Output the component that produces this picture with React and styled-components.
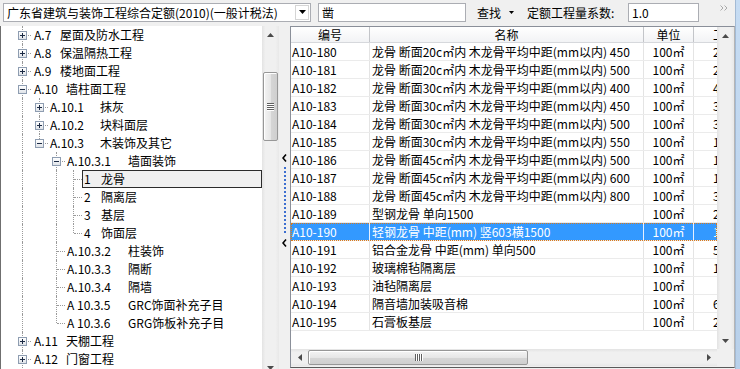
import React from 'react';
import styled, { createGlobalStyle, css } from 'styled-components';

const GlobalStyle = createGlobalStyle`
  *, *::before, *::after { box-sizing: border-box; }
  html, body { margin: 0; padding: 0; }
  body {
    width: 740px;
    height: 369px;
    overflow: hidden;
    background: #f0f0f0;
    font-family: "Noto Sans CJK SC", "Liberation Sans", sans-serif;
    font-size: 12px;
    color: #000;
  }
`;

/* ---------- frame ---------- */
const Frame = styled.div`
  display: flex;
  width: 740px;
  height: 369px;
  overflow: hidden;
`;
const Window = styled.div`
  flex: 1;
  min-width: 0;
  display: flex;
  flex-direction: column;
`;
const FrameEdge = styled.div`
  width: 5px;
  flex: none;
  background: linear-gradient(#c6dcf3, #b8d0ea);
  border-left: 1px solid #a3bad4;
`;

/* ---------- toolbar ---------- */
const Toolbar = styled.div`
  height: 26px;
  flex: none;
  display: flex;
  align-items: center;
  padding: 0 0 2px 3px;
  white-space: nowrap;
`;
const Combo = styled.div`
  width: 308px;
  height: 19px;
  display: flex;
  align-items: center;
  background: #fff;
  border: 1px solid #abadb3;
  padding-left: 3px;
`;
const ComboText = styled.span`
  flex: 1;
  overflow: hidden;
  line-height: 17px;
`;
const ComboButton = styled.div`
  width: 14px;
  height: 15px;
  margin-right: 1px;
  display: flex;
  align-items: center;
  justify-content: center;
  border: 1px solid #d5d5d5;
  background: #fff;
`;
const TextBox = styled.div`
  width: ${p => p.$w}px;
  height: 19px;
  margin-left: ${p => p.$ml}px;
  background: #fff;
  border: 1px solid #abadb3;
  padding-left: 3px;
  line-height: 17px;
`;
const MenuButton = styled.div`
  width: 38px;
  margin-left: 11px;
  display: flex;
  align-items: center;
  gap: 8px;
`;
const FieldLabel = styled.span`
  width: 101px;
  margin-left: 12px;
`;
const OverflowChevron = styled.div`
  margin-left: auto;
  margin-right: 7px;
  margin-top: -8px;
  display: flex;
`;

/* ---------- main area ---------- */
const Main = styled.div`
  flex: 1;
  min-height: 0;
  display: flex;
  align-items: flex-start;
  overflow: hidden;
`;

/* ---------- tree ---------- */
const TreePanel = styled.div`
  width: 279px;
  height: 350px;
  flex: none;
  display: flex;
  background: #fff;
  border-left: 1px solid #6f6f6f;
`;
const TreeList = styled.div`
  flex: 1;
  min-width: 0;
  overflow: hidden;
`;
const TreeRow = styled.div`
  height: 18px;
  display: flex;
  align-items: stretch;
  padding-left: 13px;
`;
const dotted = '1px dotted #9a9a9a';
const Guide = styled.div`
  width: 17px;
  flex: none;
  position: relative;
  ${p => p.$line && css`
    &::before {
      content: '';
      position: absolute;
      left: 8px;
      top: 0;
      bottom: 0;
      border-left: ${dotted};
    }
  `}
`;
const Branch = styled.div`
  width: 17px;
  flex: none;
  position: relative;
  display: flex;
  align-items: center;
  justify-content: center;
  &::before {
    content: '';
    position: absolute;
    left: 8px;
    top: 0;
    height: ${p => (p.$last ? 9 : 18)}px;
    border-left: ${dotted};
  }
  &::after {
    content: '';
    position: absolute;
    left: 9px;
    top: 9px;
    width: 8px;
    border-top: ${dotted};
  }
`;
const Expander = styled.div`
  position: relative;
  z-index: 1;
  width: 9px;
  height: 9px;
  margin-left: -1px;
  border: 1px solid #8e9db1;
  background: linear-gradient(#ffffff, #dfe3e8);
  display: flex;
`;
const ItemLabel = styled.div`
  display: flex;
  align-items: center;
  height: 18px;
  margin-left: ${p => (p.$level === 0 ? 1 : 0)}px;
  padding-left: 1px;
  border: 1px solid transparent;
  line-height: 16px;
  white-space: nowrap;
  ${p => p.$selected && css`
    flex: 1;
    border-color: #2b2b2b;
    background: #f0f0f0;
  `}
`;
const Code = styled.span`
  display: inline-block;
  width: ${p => p.$w}px;
  flex: none;
`;
const Name = styled.span``;

/* ---------- scrollbars ---------- */
const VScroll = styled.div`
  width: 17px;
  flex: none;
  display: flex;
  flex-direction: column;
  background: linear-gradient(to right, #e3e3e3, #f0f0f0 20%, #f0f0f0 80%, #e8e8e8);
`;
const HScroll = styled.div`
  height: 17px;
  flex: 1;
  display: flex;
  background: linear-gradient(#e3e3e3, #f0f0f0 20%, #f0f0f0 80%, #e8e8e8);
`;
const ArrowBox = styled.div`
  width: 17px;
  height: 17px;
  flex: none;
  display: flex;
  align-items: center;
  justify-content: center;
`;
const Filler = styled.div`flex: 1;`;
const VThumb = styled.div`
  margin-top: ${p => p.$offset}px;
  height: ${p => p.$size}px;
  margin-left: 1px;
  margin-right: 1px;
  border: 1px solid #979797;
  border-radius: 2px;
  background: linear-gradient(to right, #f4f4f4, #e6e6e6 50%, #d6d6d6 51%, #cfcfcf);
  box-shadow: inset 1px 1px 0 #fff;
  display: flex;
  flex-direction: column;
  align-items: center;
  justify-content: center;
  gap: 1px;
`;
const HThumb = styled.div`
  margin-left: ${p => p.$offset}px;
  width: ${p => p.$size}px;
  margin-top: 1px;
  margin-bottom: 1px;
  border: 1px solid #979797;
  border-radius: 2px;
  background: linear-gradient(#f4f4f4, #e6e6e6 50%, #d6d6d6 51%, #cfcfcf);
  box-shadow: inset 1px 1px 0 #fff;
  display: flex;
  align-items: center;
  justify-content: center;
  gap: 1px;
`;
const GripV = styled.span`
  width: 7px;
  height: 1px;
  background: #5f5f5f;
  box-shadow: 0 1px 0 #fff;
`;
const GripH = styled.span`
  width: 1px;
  height: 7px;
  background: #5f5f5f;
  box-shadow: 1px 0 0 #fff;
`;

const Tri = ({ dir }) => {
  const d = {
    up: 'M0 4 L3.5 0 L7 4 Z',
    down: 'M0 0 L7 0 L3.5 4 Z',
    left: 'M4 0 L4 7 L0 3.5 Z',
    right: 'M0 0 L4 3.5 L0 7 Z',
  }[dir];
  const horiz = dir === 'left' || dir === 'right';
  return (
    <svg width={horiz ? 4 : 7} height={horiz ? 7 : 4} viewBox={horiz ? '0 0 4 7' : '0 0 7 4'}>
      <path d={d} fill="#4a4a4a" />
    </svg>
  );
};

/* ---------- splitter ---------- */
const Splitter = styled.div`
  width: 11px;
  flex: none;
  align-self: stretch;
  display: flex;
  flex-direction: column;
  align-items: center;
  padding-top: 126px;
  gap: 3px;
`;
const DotLine = styled.div`
  width: 2px;
  height: 67px;
  background: repeating-linear-gradient(#3d6fd0 0 2px, transparent 2px 4px);
`;
const Chevron = () => (
  <svg width="5" height="12" viewBox="0 0 5 12">
    <path d="M4 2.5 L1 6 L4 9.5" stroke="#000" strokeWidth="1.6" fill="none" />
  </svg>
);

/* ---------- grid ---------- */
const GridPanel = styled.div`
  flex: 1;
  min-width: 0;
  align-self: stretch;
  display: flex;
  flex-direction: column;
  border-top: 1px solid #8a8f99;
  border-left: 1px solid #8a8f99;
  border-right: 1px solid #b5b5b5;
  border-bottom: 1px solid #5a5a5a;
  margin-bottom: 1px;
  background: #fff;
`;
const GridBody = styled.div`
  flex: 1;
  min-height: 0;
  display: flex;
`;
const Viewport = styled.div`
  flex: 1;
  min-width: 0;
  overflow: hidden;
`;
const HeaderRow = styled.div`
  height: 16px;
  display: flex;
  background: linear-gradient(#ffffff, #f2f3f5);
  border-bottom: 1px solid #d6d8dc;
  white-space: nowrap;
`;
const HeaderCell = styled.div`
  width: ${p => p.$w}px;
  flex: none;
  text-align: center;
  line-height: 15px;
  border-right: 1px solid #c3c5c9;
  overflow: hidden;
  padding-left: ${p => p.$pl || 0}px;
  ${p => p.$pl && css`text-align: left;`}
`;
const DataRow = styled.div`
  height: 18px;
  display: flex;
  white-space: nowrap;
  border-bottom: 1px solid #ebebeb;
  ${p => p.$selected && css`
    background: #3399ff;
    color: #fff;
    outline: 1px dotted #d87a1e;
    outline-offset: -1px;
  `}
`;
const Cell = styled.div`
  width: ${p => p.$w}px;
  flex: none;
  line-height: 17px;
  padding-left: ${p => p.$pl}px;
  text-align: ${p => (p.$center ? 'center' : 'left')};
  border-right: 1px solid ${p => (p.$selected ? '#e6f0ff' : '#e4e4e4')};
  overflow: hidden;
`;
const HScrollRow = styled.div`
  height: 17px;
  flex: none;
  display: flex;
`;
const Corner = styled.div`
  width: 17px;
  background: #f0f0f0;
`;
const BottomGap = styled.div`
  height: 1px;
  flex: none;
  background: #f0f0f0;
`;

/* ---------- data ---------- */
const tree = [
  { level: 0, anc: [], exp: '+', code: 'A.7', w: 26, name: '屋面及防水工程' },
  { level: 0, anc: [], exp: '+', code: 'A.8', w: 26, name: '保温隔热工程' },
  { level: 0, anc: [], exp: '+', code: 'A.9', w: 26, name: '楼地面工程' },
  { level: 0, anc: [], exp: '-', code: 'A.10', w: 32, name: '墙柱面工程' },
  { level: 1, anc: [true], exp: '+', code: 'A.10.1', w: 50, name: '抹灰' },
  { level: 1, anc: [true], exp: '+', code: 'A.10.2', w: 50, name: '块料面层' },
  { level: 1, anc: [true], exp: '-', last: true, code: 'A.10.3', w: 50, name: '木装饰及其它' },
  { level: 2, anc: [true, false], exp: '-', code: 'A.10.3.1', w: 61, name: '墙面装饰' },
  { level: 3, anc: [true, false, true], code: '1', w: 17, name: '龙骨', sel: true },
  { level: 3, anc: [true, false, true], code: '2', w: 17, name: '隔离层' },
  { level: 3, anc: [true, false, true], code: '3', w: 17, name: '基层' },
  { level: 3, anc: [true, false, true], last: true, code: '4', w: 17, name: '饰面层' },
  { level: 2, anc: [true, false], code: 'A.10.3.2', w: 61, name: '柱装饰' },
  { level: 2, anc: [true, false], code: 'A.10.3.3', w: 61, name: '隔断' },
  { level: 2, anc: [true, false], code: 'A.10.3.4', w: 61, name: '隔墙' },
  { level: 2, anc: [true, false], code: 'A 10.3.5', w: 61, name: 'GRC饰面补充子目' },
  { level: 2, anc: [true, false], last: true, code: 'A 10.3.6', w: 61, name: 'GRG饰板补充子目' },
  { level: 0, anc: [], exp: '+', code: 'A.11', w: 32, name: '天棚工程' },
  { level: 0, anc: [], exp: '+', code: 'A.12', w: 32, name: '门窗工程' },
];

const lg = (sec, dist) => `龙骨 断面${sec}c㎡内 木龙骨平均中距(mm以内) ${dist}`;
const rows = [
  ['A10-180', lg(20, 450), '2.36'],
  ['A10-181', lg(20, 500), '2.17'],
  ['A10-182', lg(30, 400), '4.11'],
  ['A10-183', lg(30, 450), '3.54'],
  ['A10-184', lg(30, 500), '3.22'],
  ['A10-185', lg(30, 550), '1.98'],
  ['A10-186', lg(45, 500), '1.74'],
  ['A10-187', lg(45, 600), '1.55'],
  ['A10-188', lg(45, 800), '3.01'],
  ['A10-189', '型钢龙骨 单向1500', '2.40'],
  ['A10-190', '轻钢龙骨 中距(mm) 竖603横1500', '1.00'],
  ['A10-191', '铝合金龙骨 中距(mm) 单向500', '5.10'],
  ['A10-192', '玻璃棉毡隔离层', '1.00'],
  ['A10-193', '油毡隔离层', ''],
  ['A10-194', '隔音墙加装吸音棉', '6.00'],
  ['A10-195', '石膏板基层', '2.10'],
];
const SELECTED_ROW = 'A10-190';

const cols = { code: 79, name: 274, unit: 50, qty: 70 };

/* ---------- components ---------- */
const PlusMinus = ({ plus }) => (
  <svg width="7" height="7" viewBox="0 0 7 7" shapeRendering="crispEdges">
    <rect x="1" y="3" width="5" height="1" fill="#1b2a44" />
    {plus && <rect x="3" y="1" width="1" height="5" fill="#1b2a44" />}
  </svg>
);

function TreeNode({ node }) {
  return (
    <TreeRow>
      {node.anc.map((cont, i) => (
        <Guide key={i} $line={cont} />
      ))}
      <Branch $last={node.last}>
        {node.exp && (
          <Expander>
            <PlusMinus plus={node.exp === '+'} />
          </Expander>
        )}
      </Branch>
      <ItemLabel $level={node.level} $selected={node.sel}>
        <Code $w={node.w}>{node.code}</Code>
        <Name>{node.name}</Name>
      </ItemLabel>
    </TreeRow>
  );
}

function VerticalScrollbar({ thumb }) {
  return (
    <VScroll>
      <ArrowBox><Tri dir="up" /></ArrowBox>
      {thumb && (
        <VThumb $offset={thumb.offset} $size={thumb.size}>
          <GripV /><GripV /><GripV /><GripV />
        </VThumb>
      )}
      <Filler />
      <ArrowBox><Tri dir="down" /></ArrowBox>
    </VScroll>
  );
}

function HorizontalScrollbar({ thumb }) {
  return (
    <HScroll>
      <ArrowBox><Tri dir="left" /></ArrowBox>
      <HThumb $offset={thumb.offset} $size={thumb.size}>
        <GripH /><GripH /><GripH /><GripH />
      </HThumb>
      <Filler />
      <ArrowBox><Tri dir="right" /></ArrowBox>
    </HScroll>
  );
}

export default function App() {
  return (
    <>
      <GlobalStyle />
      <Frame>
        <Window>
          <Toolbar>
            <Combo>
              <ComboText>广东省建筑与装饰工程综合定额(2010)(一般计税法)</ComboText>
              <ComboButton>
                <svg width="7" height="4" viewBox="0 0 7 4"><path d="M0 0 L7 0 L3.5 4 Z" fill="#000" /></svg>
              </ComboButton>
            </Combo>
            <TextBox $w={148} $ml={7}>凿</TextBox>
            <MenuButton>
              <span>查找</span>
              <svg width="5" height="3" viewBox="0 0 5 3"><path d="M0 0 L5 0 L2.5 3 Z" fill="#000" /></svg>
            </MenuButton>
            <FieldLabel>定额工程量系数:</FieldLabel>
            <TextBox $w={71} $ml={0}>1.0</TextBox>
            <OverflowChevron>
              <svg width="8" height="6" viewBox="0 0 8 6">
                <path d="M0.5 0.5 L3 3 L0.5 5.5 M4.5 0.5 L7 3 L4.5 5.5" stroke="#a9a9a9" strokeWidth="1" fill="none" />
              </svg>
            </OverflowChevron>
          </Toolbar>

          <Main>
            <TreePanel>
              <TreeList>
                {tree.map((n, i) => (
                  <TreeNode key={i} node={n} />
                ))}
              </TreeList>
              <VerticalScrollbar thumb={{ offset: 29, size: 69 }} />
            </TreePanel>

            <Splitter>
              <Chevron />
              <DotLine />
              <Chevron />
            </Splitter>

            <GridPanel>
              <GridBody>
                <Viewport>
                  <HeaderRow>
                    <HeaderCell $w={cols.code}>编号</HeaderCell>
                    <HeaderCell $w={cols.name}>名称</HeaderCell>
                    <HeaderCell $w={cols.unit}>单位</HeaderCell>
                    <HeaderCell $w={cols.qty} $pl={19}>工程量</HeaderCell>
                  </HeaderRow>
                  {rows.map(([code, name, qty]) => {
                    const sel = code === SELECTED_ROW;
                    return (
                      <DataRow key={code} $selected={sel}>
                        <Cell $w={cols.code} $pl={1} $selected={sel}>{code}</Cell>
                        <Cell $w={cols.name} $pl={2} $selected={sel}>{name}</Cell>
                        <Cell $w={cols.unit} $pl={0} $center $selected={sel}>100㎡</Cell>
                        <Cell $w={cols.qty} $pl={19} $selected={sel}>{qty}</Cell>
                      </DataRow>
                    );
                  })}
                </Viewport>
                <VerticalScrollbar />
              </GridBody>
              <HScrollRow>
                <HorizontalScrollbar thumb={{ offset: 0, size: 220 }} />
                <Corner />
              </HScrollRow>
              <BottomGap />
            </GridPanel>
          </Main>
        </Window>
        <FrameEdge />
      </Frame>
    </>
  );
}
